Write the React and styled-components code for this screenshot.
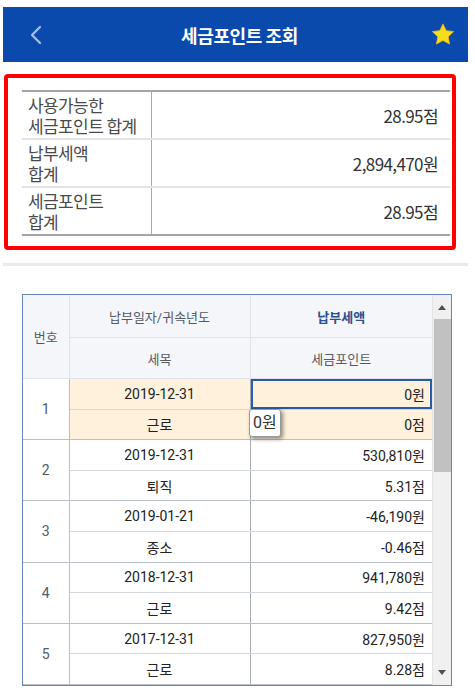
import React from 'react';
import styled, { createGlobalStyle, css } from 'styled-components';

const GlobalStyle = createGlobalStyle`
  html, body {
    margin: 0;
    padding: 0;
    background: #ffffff;
  }
  body {
    font-family: 'Noto Sans CJK KR', 'Noto Sans', sans-serif;
  }
`;

const Page = styled.div`
  width: 475px;
  height: 696px;
  overflow: hidden;
  background: #fff;
`;

const Header = styled.div`
  margin: 7px 7px 0 3px;
  height: 55px;
  background: #0b4aad;
  display: flex;
  align-items: center;
  justify-content: space-between;
  padding: 0 12px 0 20px;
  box-sizing: border-box;
`;

const Title = styled.div`
  color: #fff;
  font-family: 'Noto Sans CJK KR', sans-serif;
  font-size: 18px;
  font-weight: 700;
  letter-spacing: -0.4px;
`;

const IconBtn = styled.div`
  width: 26px;
  height: 26px;
  display: flex;
  align-items: center;
  justify-content: center;
`;

const SummaryBox = styled.div`
  margin: 12px 0 0 4px;
  width: 452px;
  box-sizing: border-box;
  border: 4px solid #ff0000;
  border-radius: 4px;
  padding: 12px 2px 10px 14px;
`;

const SumTable = styled.table`
  width: 100%;
  border-collapse: collapse;
  border-top: 2px solid #a2a4a8;
  border-bottom: 2px solid #a2a4a8;
  font-family: 'Noto Sans CJK KR', sans-serif;
`;

const SumRow = styled.tr`
  height: 48px;
  & + & td { border-top: 2px solid #e2e3e6; }
`;

const SumLabel = styled.td`
  width: 123px;
  padding: 0 0 0 6px;
  border-right: 1px solid #a8aaae;
  font-size: 17px;
  line-height: 21px;
  color: #4a4a4a;
  letter-spacing: -0.6px;
  vertical-align: middle;
`;

const SumValue = styled.td`
  padding: 0 12px 0 0;
  text-align: right;
  font-size: 17px;
  color: #333;
  letter-spacing: -0.6px;
  vertical-align: middle;
`;

const Divider = styled.div`
  margin: 13px 7px 0 3px;
  height: 3px;
  background: #e8eaed;
`;

const Grid = styled.div`
  position: relative;
  margin: 28px 0 0 22px;
  width: 430px;
  box-sizing: border-box;
  border: 1.5px solid #6486bd;
  display: flex;
  font-family: 'Roboto', 'Noto Sans CJK KR', sans-serif;
`;

const GridTable = styled.table`
  width: 409px;
  border-collapse: collapse;
  table-layout: fixed;
`;

const Th = styled.th`
  background: #f4f6fa;
  font-weight: 400;
  font-size: 13px;
  color: #555a62;
  text-align: center;
  border-bottom: 1px solid #dfe2e8;
  border-right: 1px solid #dfe2e8;
  height: ${p => p.h}px;
  padding: 0;
  ${p => p.accent && css`
    color: #2a4e8e;
    font-weight: 700;
  `}
  ${p => p.last && css`border-right: none;`}
`;

const Td = styled.td`
  height: 30.6px;
  padding: 0 7px;
  font-size: 14px;
  font-weight: 400;
  color: #222;
  text-align: ${p => p.align || 'center'};
  background: ${p => (p.hl ? '#fff1dc' : '#fff')};
  border-bottom: 1px solid ${p => (p.group ? '#b9bec7' : '#d3d7de')};
  border-right: 1px solid #a9aeb6;
  box-sizing: border-box;
  ${p => p.last && css`border-right: none;`}
  ${p => p.selected && css`box-shadow: inset 0 0 0 2px #2a5aa8;`}
`;

const NoCell = styled(Td)`
  color: #4d5b70;
  padding: 0;
  border-right: 1px solid #b9bec7;
  border-bottom: 1px solid #b9bec7;
`;

const Scroll = styled.div`
  width: 19px;
  background: #f0f0f0;
  display: flex;
  flex-direction: column;
  align-items: center;
  border-left: 1px solid #e4e4e4;
`;

const Arrow = styled.div`
  height: 24px;
  display: flex;
  align-items: center;
  justify-content: center;
`;

const Thumb = styled.div`
  width: 17px;
  height: 153px;
  background: #c1c1c1;
`;

const Spacer = styled.div`
  flex: 1;
`;

const Tip = styled.div`
  position: absolute;
  left: 226px;
  top: 114px;
  padding: 3px 3px;
  background: #fff;
  border: 1px solid #9a9a9a;
  border-radius: 3px;
  box-shadow: 2px 2px 4px rgba(0, 0, 0, 0.45);
  font-family: 'Roboto', 'Noto Sans CJK KR', sans-serif;
  font-size: 16px;
  line-height: 20px;
  color: #333;
`;

const summary = [
  { label: ['사용가능한', '세금포인트 합계'], value: '28.95점' },
  { label: ['납부세액', '합계'], value: '2,894,470원' },
  { label: ['세금포인트', '합계'], value: '28.95점' },
];

const rows = [
  { no: 1, date: '2019-12-31', kind: '근로', amount: '0원', point: '0점', hl: true },
  { no: 2, date: '2019-12-31', kind: '퇴직', amount: '530,810원', point: '5.31점' },
  { no: 3, date: '2019-01-21', kind: '종소', amount: '-46,190원', point: '-0.46점' },
  { no: 4, date: '2018-12-31', kind: '근로', amount: '941,780원', point: '9.42점' },
  { no: 5, date: '2017-12-31', kind: '근로', amount: '827,950원', point: '8.28점' },
];

const App = () => {
  return (
    <Page>
      <GlobalStyle />
      <Header>
        <IconBtn>
          <svg width="14" height="20" viewBox="0 0 14 20">
            <polyline points="11,2 3,10 11,18" fill="none" stroke="#a9c0ea" strokeWidth="2.2" strokeLinecap="round" strokeLinejoin="round" />
          </svg>
        </IconBtn>
        <Title>세금포인트 조회</Title>
        <IconBtn>
          <svg width="26" height="25" viewBox="0 0 24 24">
            <path d="M12 1.8l3.1 6.5 7.1.9-5.2 4.9 1.3 7.1L12 17.8l-6.3 3.4 1.3-7.1L1.8 9.2l7.1-.9z" fill="#f7dc1b" stroke="#e3b80c" strokeWidth="0.8" strokeLinejoin="round" />
          </svg>
        </IconBtn>
      </Header>

      <SummaryBox>
        <SumTable>
          <tbody>
            {summary.map((s, i) => (
              <SumRow key={i}>
                <SumLabel>{s.label[0]}<br />{s.label[1]}</SumLabel>
                <SumValue>{s.value}</SumValue>
              </SumRow>
            ))}
          </tbody>
        </SumTable>
      </SummaryBox>

      <Divider />

      <Grid>
        <GridTable>
          <colgroup>
            <col style={{ width: 46 }} />
            <col style={{ width: 181 }} />
            <col style={{ width: 182 }} />
          </colgroup>
          <thead>
            <tr>
              <Th rowSpan={2} h={42}>번호</Th>
              <Th h={42}>납부일자/귀속년도</Th>
              <Th h={42} accent last>납부세액</Th>
            </tr>
            <tr>
              <Th h={40}>세목</Th>
              <Th h={40} last>세금포인트</Th>
            </tr>
          </thead>
          <tbody>
            {rows.map(r => (
              <React.Fragment key={r.no}>
                <tr>
                  <NoCell rowSpan={2}>{r.no}</NoCell>
                  <Td hl={r.hl}>{r.date}</Td>
                  <Td hl={r.hl} align="right" last selected={r.hl}>{r.amount}</Td>
                </tr>
                <tr>
                  <Td hl={r.hl} group>{r.kind}</Td>
                  <Td hl={r.hl} group align="right" last>{r.point}</Td>
                </tr>
              </React.Fragment>
            ))}
          </tbody>
        </GridTable>
        <Scroll>
          <Arrow>
            <svg width="8" height="5" viewBox="0 0 8 5"><polygon points="0,5 4,0 8,5" fill="#505050" /></svg>
          </Arrow>
          <Thumb />
          <Spacer />
          <Arrow>
            <svg width="8" height="5" viewBox="0 0 8 5"><polygon points="0,0 8,0 4,5" fill="#505050" /></svg>
          </Arrow>
        </Scroll>
        <Tip>0원</Tip>
      </Grid>
    </Page>
  );
};

export default App;
